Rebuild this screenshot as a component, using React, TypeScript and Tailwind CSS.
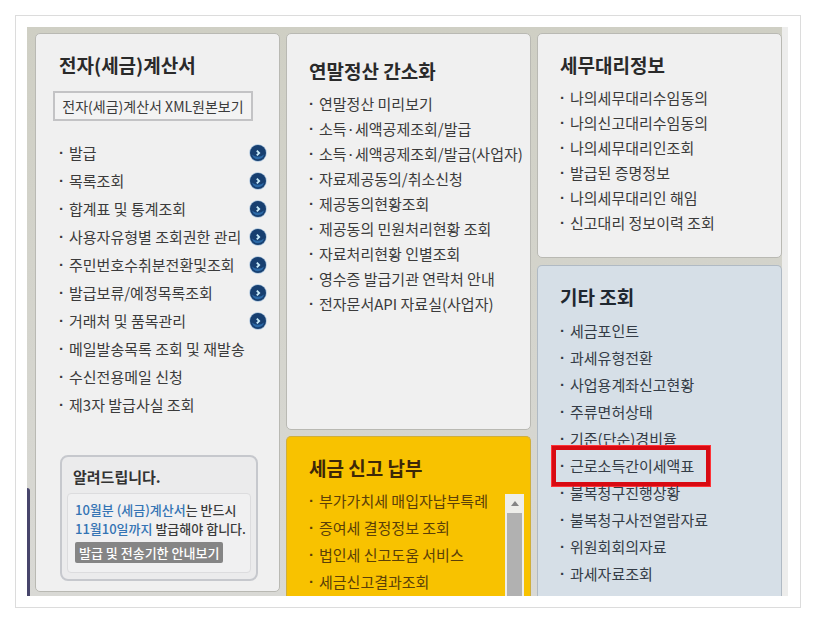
import type { ReactNode } from "react";

type Item = { label: string; more?: boolean; marked?: boolean };

const invoiceItems: Item[] = [
  { label: "발급", more: true },
  { label: "목록조회", more: true },
  { label: "합계표 및 통계조회", more: true },
  { label: "사용자유형별 조회권한 관리", more: true },
  { label: "주민번호수취분전환및조회", more: true },
  { label: "발급보류/예정목록조회", more: true },
  { label: "거래처 및 품목관리", more: true },
  { label: "메일발송목록 조회 및 재발송" },
  { label: "수신전용메일 신청" },
  { label: "제3자 발급사실 조회" },
];

const yearEndItems: Item[] = [
  { label: "연말정산 미리보기" },
  { label: "소득·세액공제조회/발급" },
  { label: "소득·세액공제조회/발급(사업자)" },
  { label: "자료제공동의/취소신청" },
  { label: "제공동의현황조회" },
  { label: "제공동의 민원처리현황 조회" },
  { label: "자료처리현황 인별조회" },
  { label: "영수증 발급기관 연락처 안내" },
  { label: "전자문서API 자료실(사업자)" },
];

const filingItems: Item[] = [
  { label: "부가가치세 매입자납부특례" },
  { label: "증여세 결정정보 조회" },
  { label: "법인세 신고도움 서비스" },
  { label: "세금신고결과조회" },
];

const agentItems: Item[] = [
  { label: "나의세무대리수임동의" },
  { label: "나의신고대리수임동의" },
  { label: "나의세무대리인조회" },
  { label: "발급된 증명정보" },
  { label: "나의세무대리인 해임" },
  { label: "신고대리 정보이력 조회" },
];

const otherItems: Item[] = [
  { label: "세금포인트" },
  { label: "과세유형전환" },
  { label: "사업용계좌신고현황" },
  { label: "주류면허상태" },
  { label: "기준(단순)경비율" },
  { label: "근로소득간이세액표", marked: true },
  { label: "불복청구진행상황" },
  { label: "불복청구사전열람자료" },
  { label: "위원회회의자료" },
  { label: "과세자료조회" },
];

function Title({ children }: { children: ReactNode }) {
  return <h2 className="text-[19px] leading-7 font-bold whitespace-nowrap">{children}</h2>;
}

function MoreIcon() {
  return (
    <svg viewBox="0 0 18 18" className="size-[18px]" aria-hidden="true">
      <circle cx="9" cy="9" r="8.7" fill="#a9c3dc" />
      <circle cx="9" cy="9" r="8" fill="#173f70" />
      <path d="M3 10.5a6.2 6.2 0 0 0 12 0a9 9 0 0 1-12 0z" fill="#2c6aa8" />
      <path d="M7.8 6.6 10.2 9l-2.4 2.4" fill="none" stroke="#c9ecfb" strokeWidth="1.8" />
    </svg>
  );
}

function MenuList({ items, row }: { items: Item[]; row: string }) {
  return (
    <ul className="text-[15px] whitespace-nowrap">
      {items.map((item) => (
        <li key={item.label} className={`relative flex items-center ${row}`}>
          <a href="#" className="flex">
            <span className="w-2.5 font-['Liberation_Sans',sans-serif] font-bold">·</span>
            {item.label}
          </a>
          {item.more && (
            <button type="button" aria-label={`${item.label} 더보기`} className="ml-auto">
              <MoreIcon />
            </button>
          )}
          {item.marked && (
            <span className="pointer-events-none absolute -top-2 -left-[9px] h-[42px] w-[160px] border-5 border-[#d80a12] outline-1 -outline-offset-1 outline-[#ff3338]" />
          )}
        </li>
      ))}
    </ul>
  );
}

export default function App() {
  return (
    <div className="bg-white p-[15px] font-['Noto_Sans_CJK_KR',sans-serif] text-[#3b3b3b]">
      <div className="border border-[#dcdcdc] pt-[11px] pr-3 pb-[11px] pl-[11px]">
        <main className="flex bg-linear-to-b from-[#cfcfc4] to-[#d9d9d5]">
          <div className="flex w-2 flex-col justify-end">
            <div className="h-[108px] w-[3px] rounded-tr-sm bg-[#47456b]" />
          </div>

          <div className="grid flex-1 grid-cols-3 gap-1.5 pt-1.5">
            <section className="mb-1 rounded-[5px] border border-[#b9b9b3] bg-[#f0f0f0] pb-2">
              <div className="px-[23px] pt-[17px] text-[#2a2a2a]">
                <Title>전자(세금)계산서</Title>
              </div>
              <div className="px-[17px] pt-3">
                <button
                  type="button"
                  className="h-[30px] w-[200px] border-2 border-[#c3c3c5] bg-[#f3f3f3] text-sm leading-6 whitespace-nowrap"
                >
                  전자(세금)계산서 XML원본보기
                </button>
              </div>
              <div className="pt-[18px] pr-3 pl-[23px]">
                <MenuList items={invoiceItems} row="h-7" />
              </div>
              <aside className="mx-6 mt-9 w-[198px] rounded-lg border-2 border-[#c6c8cd] bg-[#ebebec] px-[5px] pb-1.5">
                <h3 className="px-1.5 pt-2 pb-1 text-[15px] leading-6 font-bold text-[#333]">알려드립니다.</h3>
                <div className="rounded-sm border border-[#dcdcde] bg-[#f0f0f1] px-[7px] pt-1.5 pb-[9px] text-[13px] font-medium whitespace-nowrap">
                  <p className="leading-[19px]">
                    <strong className="font-medium text-[#3474b4]">10월분 (세금)계산서</strong>는 반드시
                    <br />
                    <strong className="font-medium text-[#3474b4]">11월10일까지</strong> 발급해야 합니다.
                  </p>
                  <button
                    type="button"
                    className="mt-1 block h-[21px] rounded-xs bg-[#858585] px-1 leading-5 text-white"
                  >
                    발급 및 전송기한 안내보기
                  </button>
                </div>
              </aside>
            </section>

            <div className="flex flex-col gap-1.5">
              <section className="h-[397px] rounded-[5px] border border-[#b9b9b3] bg-[#f0f0f0] px-[22px] pt-[23px]">
                <div className="pb-[7px] text-[#2a2a2a]">
                  <Title>연말정산 간소화</Title>
                </div>
                <MenuList items={yearEndItems} row="h-[25px]" />
              </section>
              <section className="flex flex-1 flex-col rounded-t-[5px] border border-b-0 border-[#cfae3c] bg-[#f8c200] pt-[17px] pl-[22px] text-[#5b4008]">
                <div className="pb-1.5 text-[#3d2708]">
                  <Title>세금 신고 납부</Title>
                </div>
                <div className="flex flex-1 justify-between">
                  <MenuList items={filingItems} row="h-[27px]" />
                  <div className="mt-1.5 mr-1.5 flex w-[19px] flex-col bg-[#eeeeea]">
                    <button type="button" aria-label="위로" className="flex h-[19px] items-center justify-center">
                      <svg viewBox="0 0 8 5" className="h-[5px] w-2" aria-hidden="true">
                        <path d="M0 5 4 0l4 5z" fill="#858585" />
                      </svg>
                    </button>
                    <div className="mx-0.5 flex-1 bg-[#b1b1b1]" />
                  </div>
                </div>
              </section>
            </div>

            <div className="flex flex-col gap-[7px]">
              <section className="h-[225px] rounded-[5px] border border-[#b9b9b3] bg-[#f0f0f0] px-[22px] pt-[17px]">
                <div className="pb-[7px] text-[#2a2a2a]">
                  <Title>세무대리정보</Title>
                </div>
                <MenuList items={agentItems} row="h-[25px]" />
              </section>
              <section className="flex-1 rounded-t-[5px] border border-b-0 border-[#b0bac4] bg-[#d6dfe7] px-[22px] pt-[17px] text-[#343c46]">
                <div className="pb-[7px] text-[#1f2730]">
                  <Title>기타 조회</Title>
                </div>
                <MenuList items={otherItems} row="h-[27px]" />
              </section>
            </div>
          </div>

          <div className="w-1.5 bg-[#ededec]" />
        </main>
      </div>
    </div>
  );
}
